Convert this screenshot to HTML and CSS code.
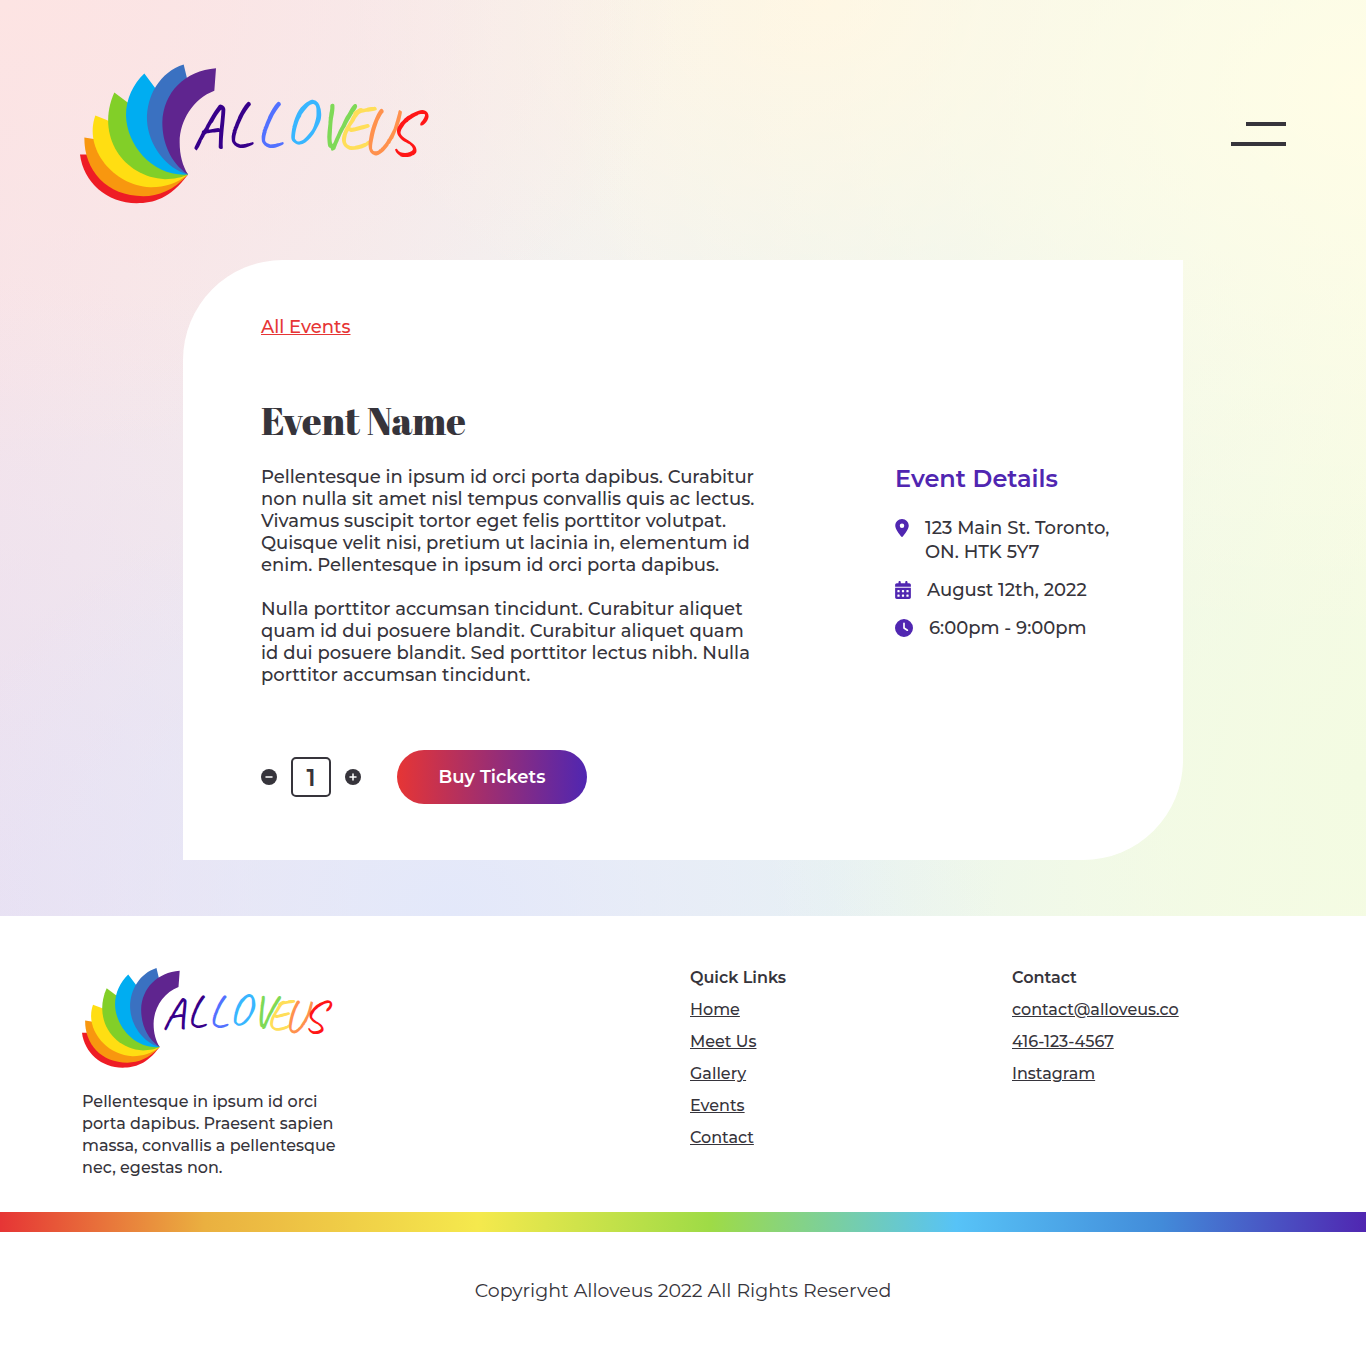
FILE: index.html
```html
<!DOCTYPE html>
<html lang="en">
<head>
<meta charset="utf-8">
<meta name="viewport" content="width=device-width, initial-scale=1">
<title>Event Name | Alloveus</title>
<link rel="stylesheet" href="styles.css">
</head>
<body>
<div class="hero">
  <header class="site-header">
    <a href="#" aria-label="Alloveus home"><svg class="logo" viewBox="30 27 1044 417">
      <g id="petals">
        <path fill="#ee1c25" d="M30 297H60L354 357C300 430 250 443 200 443C110 443 40 380 30 297z"/>
        <path fill="#f8970f" d="M43 246L76 251L354 357C310 405 265 422 220 422C110 422 42 345 43 246z"/>
        <path fill="#ffde12" d="M76 180L112 194L354 357C320 385 280 396 240 395C130 390 40 280 76 180z"/>
        <path fill="#82cf28" d="M133 111L172 140L354 357C340 365 310 371 285 371C160 365 75 240 133 111z"/>
        <path fill="#00adf1" d="M223 54L256 98L300 300L354 357C250 365 170 270 168 180C168 130 190 85 223 54z"/>
        <path fill="#3a71c1" d="M341 27L351 68C280 130 280 280 354 357C290 340 235 270 231 195C229 120 270 50 341 27z"/>
        <path fill="#5f258f" d="M438 38L433 106C370 130 329 195 329 260C329 300 338 330 354 357C300 320 277 260 277 200C280 110 345 45 438 38z"/>
      </g>
      <text class="wordmark" x="364 466 556 642 736 800 872 950" y="276 268 268 260 270 280 290 296"><tspan fill="#37008a">AL</tspan><tspan fill="#5271ff">L</tspan><tspan fill="#38b6ff">O</tspan><tspan fill="#7ed957">V</tspan><tspan fill="#ffde59">E</tspan><tspan fill="#ff914d">U</tspan><tspan fill="#ff1616">S</tspan></text>
    </svg></a>
    <button class="menu" type="button" aria-label="Open menu"><span class="menu-line menu-line-short"></span><span class="menu-line"></span></button>
  </header>

  <main class="card">
    <a class="back" href="#">All Events</a>
    <h1>Event Name</h1>
    <div class="event">
      <div class="description">
        <p>Pellentesque in ipsum id orci porta dapibus. Curabitur non nulla sit amet nisl tempus convallis quis ac lectus. Vivamus suscipit tortor eget felis porttitor volutpat. Quisque velit nisi, pretium ut lacinia in, elementum id enim. Pellentesque in ipsum id orci porta dapibus.</p>
        <p>Nulla porttitor accumsan tincidunt. Curabitur aliquet quam id dui posuere blandit. Curabitur aliquet quam id dui posuere blandit. Sed porttitor lectus nibh. Nulla porttitor accumsan tincidunt.</p>
      </div>
      <section class="details">
        <h2>Event Details</h2>
        <ul>
          <li><svg class="pin" viewBox="0 0 384 512"><path d="M215.7 499.2C267 435 384 279.4 384 192C384 86 298 0 192 0S0 86 0 192c0 87.400 117 243 168.300 307.200c12.300 15.300 35.100 15.300 47.400 0zM192 128a64 64 0 1 1 0 128a64 64 0 1 1 0-128z"/></svg><span>123 Main St. Toronto,<br>ON. HTK 5Y7</span></li>
          <li><svg class="calendar" viewBox="0 0 448 512"><path d="M128 0c17.700 0 32 14.300 32 32V64H288V32c0-17.700 14.300-32 32-32s32 14.300 32 32V64h48c26.500 0 48 21.500 48 48v48H0V112C0 85.500 21.500 64 48 64H96V32c0-17.700 14.300-32 32-32zM0 192H448V464c0 26.500-21.500 48-48 48H48c-26.500 0-48-21.500-48-48V192zm64 80v32c0 8.800 7.200 16 16 16h32c8.800 0 16-7.200 16-16V272c0-8.800-7.200-16-16-16H80c-8.800 0-16 7.200-16 16zm128 0v32c0 8.800 7.200 16 16 16h32c8.800 0 16-7.200 16-16V272c0-8.800-7.200-16-16-16H208c-8.800 0-16 7.200-16 16zm144-16c-8.800 0-16 7.200-16 16v32c0 8.800 7.200 16 16 16h32c8.800 0 16-7.200 16-16V272c0-8.800-7.200-16-16-16H336zM64 400v32c0 8.800 7.200 16 16 16h32c8.800 0 16-7.200 16-16V400c0-8.800-7.200-16-16-16H80c-8.800 0-16 7.200-16 16zm144-16c-8.800 0-16 7.200-16 16v32c0 8.800 7.200 16 16 16h32c8.800 0 16-7.200 16-16V400c0-8.800-7.200-16-16-16H208zm112 16v32c0 8.800 7.200 16 16 16h32c8.800 0 16-7.200 16-16V400c0-8.800-7.200-16-16-16H336c-8.800 0-16 7.200-16 16z"/></svg><span>August 12th, 2022</span></li>
          <li><svg class="clock" viewBox="0 0 512 512"><path d="M256 0a256 256 0 1 1 0 512A256 256 0 1 1 256 0zM232 120V256c0 8 4 15.500 10.700 20l96 64c11 7.400 25.900 4.400 33.300-6.700s4.400-25.900-6.700-33.300L280 243.200V120c0-13.300-10.700-24-24-24s-24 10.700-24 24z"/></svg><span>6:00pm - 9:00pm</span></li>
        </ul>
      </section>
    </div>
    <form class="purchase">
      <button class="step" type="button" aria-label="Fewer tickets"><svg viewBox="0 0 16 16"><circle cx="8" cy="8" r="8"/><path d="M5 8h6"/></svg></button>
      <input class="quantity" type="text" inputmode="numeric" value="1" aria-label="Number of tickets">
      <button class="step" type="button" aria-label="More tickets"><svg viewBox="0 0 16 16"><circle cx="8" cy="8" r="8"/><path d="M5 8h6M8 5v6"/></svg></button>
      <button class="buy" type="button">Buy Tickets</button>
    </form>
  </main>
</div>

<footer>
  <div class="footer-columns">
    <div class="about">
      <svg class="logo logo-small" viewBox="30 27 1044 417" role="img" aria-label="Alloveus">
        <use href="#petals"/>
        <text class="wordmark" x="364 466 556 642 736 800 872 950" y="276 268 268 260 270 280 290 296"><tspan fill="#37008a">AL</tspan><tspan fill="#5271ff">L</tspan><tspan fill="#38b6ff">O</tspan><tspan fill="#7ed957">V</tspan><tspan fill="#ffde59">E</tspan><tspan fill="#ff914d">U</tspan><tspan fill="#ff1616">S</tspan></text>
      </svg>
      <p>Pellentesque in ipsum id orci porta dapibus. Praesent sapien massa, convallis a pellentesque nec, egestas non.</p>
    </div>
    <nav class="links" aria-labelledby="quick">
      <h3 id="quick">Quick Links</h3>
      <a href="#">Home</a>
      <a href="#">Meet Us</a>
      <a href="#">Gallery</a>
      <a href="#">Events</a>
      <a href="#">Contact</a>
    </nav>
    <section class="links">
      <h3>Contact</h3>
      <a href="#">contact@alloveus.co</a>
      <a href="#">416-123-4567</a>
      <a href="#">Instagram</a>
    </section>
  </div>
  <div class="rainbow"></div>
  <p class="copyright">Copyright Alloveus 2022 All Rights Reserved</p>
</footer>
</body>
</html>
```
FILE: styles.css
```css
* { box-sizing: border-box; }

body {
  margin: 0;
  background: #fff;
  color: #36343b;
  font-family: Montserrat, Inter, sans-serif;
  font-size: 18px;
  font-weight: 500;
  line-height: 22px;
}

h1, h2, h3, p, ul { margin: 0; padding: 0; }
button { padding: 0; border: 0; background: none; font: inherit; cursor: pointer; }
svg { display: block; }

.hero {
  padding: 64px 80px 56px;
  background:
    radial-gradient(ellipse 50% 50% at 0% 0%, #fde4e3, #fde4e300),
    radial-gradient(ellipse 60% 60% at 100% 10%, #fffde6, #fffde600),
    radial-gradient(ellipse 35% 40% at 60% 0%, #fff4e3, #fff4e300),
    radial-gradient(ellipse 45% 60% at 100% 85%, #f3fbe2, #f3fbe200),
    radial-gradient(ellipse 40% 50% at 33% 100%, #e3e8fa, #e3e8fa00),
    radial-gradient(ellipse 45% 70% at 0% 100%, #e9e0f2, #e9e0f200),
    linear-gradient(100deg, #f6e3e9, #f2f3f1 45%, #e8f3f3 65%, #f8fce5);
}

.site-header { display: flex; align-items: center; justify-content: space-between; }
.logo { width: 348px; height: 140px; overflow: visible; }
.wordmark { font-family: Caveat, Lato, cursive; font-size: 190px; font-weight: 500; }

.menu { display: flex; flex-direction: column; align-items: flex-end; gap: 16px; }
.menu-line { width: 55px; height: 4px; background: #36343b; }
.menu-line-short { width: 40px; }

.card {
  max-width: 1000px;
  margin: 56px auto 0;
  padding: 56px 64px 56px 78px;
  border-radius: 100px 0;
  background: #fff;
}
.back { color: #e63535; }
h1 { margin-top: 60px; font: normal 38px/46px "Abril Fatface", "Playfair Display", "Liberation Serif", serif; }
.event { display: grid; grid-template-columns: 500px 1fr; gap: 134px; margin-top: 22px; }
.description p + p { margin-top: 22px; }
h2 { color: #5026b1; font-size: 24px; line-height: 26px; font-weight: 600; }
.details ul { display: grid; gap: 14px; margin-top: 24px; list-style: none; }
.details li { display: flex; gap: 16px; line-height: 24px; }
.details svg { flex: none; height: 18px; margin-top: 3px; fill: #5026b1; }
.pin { width: 14px; }
.calendar { width: 16px; }
.clock { width: 18px; }

.purchase { display: flex; align-items: center; margin-top: 64px; }
.step svg { width: 16px; height: 16px; fill: #36343b; stroke: #fff; stroke-width: 1.5; stroke-linecap: round; }
.step circle { stroke: none; }
.quantity {
  width: 40px;
  height: 40px;
  margin: 0 14px;
  padding: 0;
  border: 2px solid #36343b;
  border-radius: 5px;
  background: #fff;
  color: inherit;
  font: 600 24px/28px Montserrat, Inter, sans-serif;
  text-align: center;
}
.buy {
  min-width: 190px;
  height: 54px;
  margin-left: 36px;
  border-radius: 27px;
  background: linear-gradient(90deg, #e63535, #5026b1);
  color: #fff;
  font-weight: 600;
}

.footer-columns {
  display: grid;
  grid-template-columns: 608px 322px 1fr;
  padding: 52px 82px 33px;
  font-size: 16px;
}
.logo-small { width: 250px; height: 100px; }
.about p { max-width: 260px; margin-top: 23px; }
.links { display: flex; flex-direction: column; align-items: flex-start; gap: 12px; line-height: 20px; }
.links h3 { font-size: 16px; font-weight: 600; }
a { color: inherit; }

.rainbow {
  height: 20px;
  background: linear-gradient(90deg, #e63535, #eab040 15%, #f5e94d 35%, #9edb46 52%, #57c3f7 70%, #428bd9 85%, #5026b1);
}
.copyright { padding: 48px 20px; font-size: 19px; font-weight: 400; text-align: center; }
```
